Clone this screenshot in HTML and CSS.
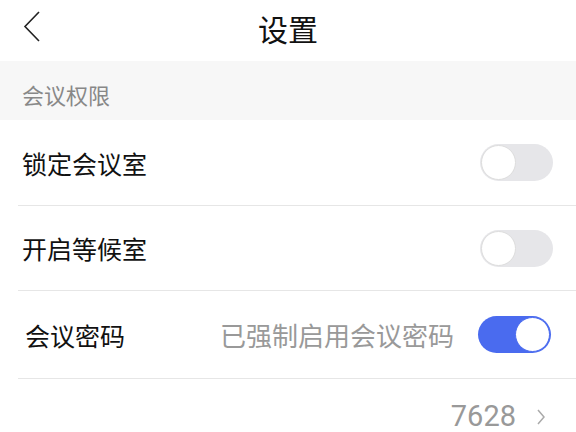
FILE: index.html
```html
<!DOCTYPE html>
<html lang="zh-CN">
<head>
    <meta charset="UTF-8">
    <meta name="viewport" content="width=device-width, initial-scale=1.0">
    <title>设置</title>
    <link rel="stylesheet" href="styles.css">
</head>
<body>
    <div id="topo">
        <a href="#" class="voltar">
            <svg width="20" height="32" viewBox="0 0 20 32"><path d="M17 1 L3 15.5 L17 30" fill="none" stroke="#222" stroke-width="1.6"/></svg>
        </a>
        <h1>设置</h1>
    </div>

    <div class="secao">会议权限</div>

    <div class="linha linha-1">
        <span class="rotulo">锁定会议室</span>
        <span class="chave"><span class="bola"></span></span>
    </div>
    <div class="linha linha-2">
        <span class="rotulo">开启等候室</span>
        <span class="chave"><span class="bola"></span></span>
    </div>
    <div class="linha linha-senha">
        <span class="rotulo">会议密码</span>
        <span class="dica">已强制启用会议密码</span>
        <span class="chave ligada"><span class="bola"></span></span>
    </div>
    <div class="linha linha-codigo">
        <span class="codigo">7628</span>
        <svg class="seta" width="10" height="18" viewBox="0 0 10 18"><path d="M2 2 L8 9 L2 16" fill="none" stroke="#aaa" stroke-width="1.5"/></svg>
    </div>
</body>
</html>
```

FILE: styles.css
```css
body {
    font-family: "Noto Sans CJK SC", "Noto Sans", sans-serif;
    background-color: #fff;
    color: #111;
    margin: 0;
    padding: 0;
    overflow: hidden;
}

#topo {
    height: 61px;
    display: flex;
    align-items: center;
    justify-content: center;
    position: relative;
    padding-bottom: 5px;
    box-sizing: border-box;
}

#topo h1 {
    margin: 0;
    font-size: 30px;
    font-weight: normal;
    color: #111;
}

.voltar {
    position: absolute;
    left: 22px;
    top: 11px;
    display: flex;
}

.secao {
    height: 59px;
    background-color: #f7f7f7;
    color: #888;
    font-size: 22px;
    padding-left: 22px;
    display: flex;
    align-items: center;
    padding-top: 6px;
    box-sizing: border-box;
}

.linha {
    height: 85px;
    margin-left: 18px;
    padding: 0 23px 0 4px;
    display: flex;
    align-items: center;
    border-bottom: 1px solid #e6e6e6;
}

.linha-2 {
    height: 84px;
}

.linha-senha {
    height: 87px;
    padding-left: 7px;
    padding-right: 25px;
}

.rotulo {
    font-size: 25px;
    flex: 1;
}

.dica {
    font-size: 26px;
    color: #999;
    margin-right: 24px;
}

.chave {
    width: 73px;
    height: 37px;
    border-radius: 19px;
    background-color: #e6e6e9;
    display: flex;
    align-items: center;
    box-sizing: border-box;
    padding: 0 1px;
}

.bola {
    width: 35px;
    height: 35px;
    border-radius: 50%;
    background-color: #fff;
    border: 1px solid #ddd;
    box-sizing: border-box;
}

.chave.ligada {
    background-color: #4a6bef;
    justify-content: flex-end;
}

.chave.ligada .bola {
    border-color: #4a6bef;
}

.linha-codigo {
    height: 53px;
    border-bottom: none;
    justify-content: flex-end;
    padding-right: 30px;
    align-items: flex-start;
    padding-top: 22px;
    box-sizing: border-box;
}

.codigo {
    font-family: Roboto, "Noto Sans", sans-serif;
    font-size: 29px;
    color: #999;
    line-height: 31px;
    margin-right: 20px;
}

.seta {
    margin-top: 7px;
}
```
